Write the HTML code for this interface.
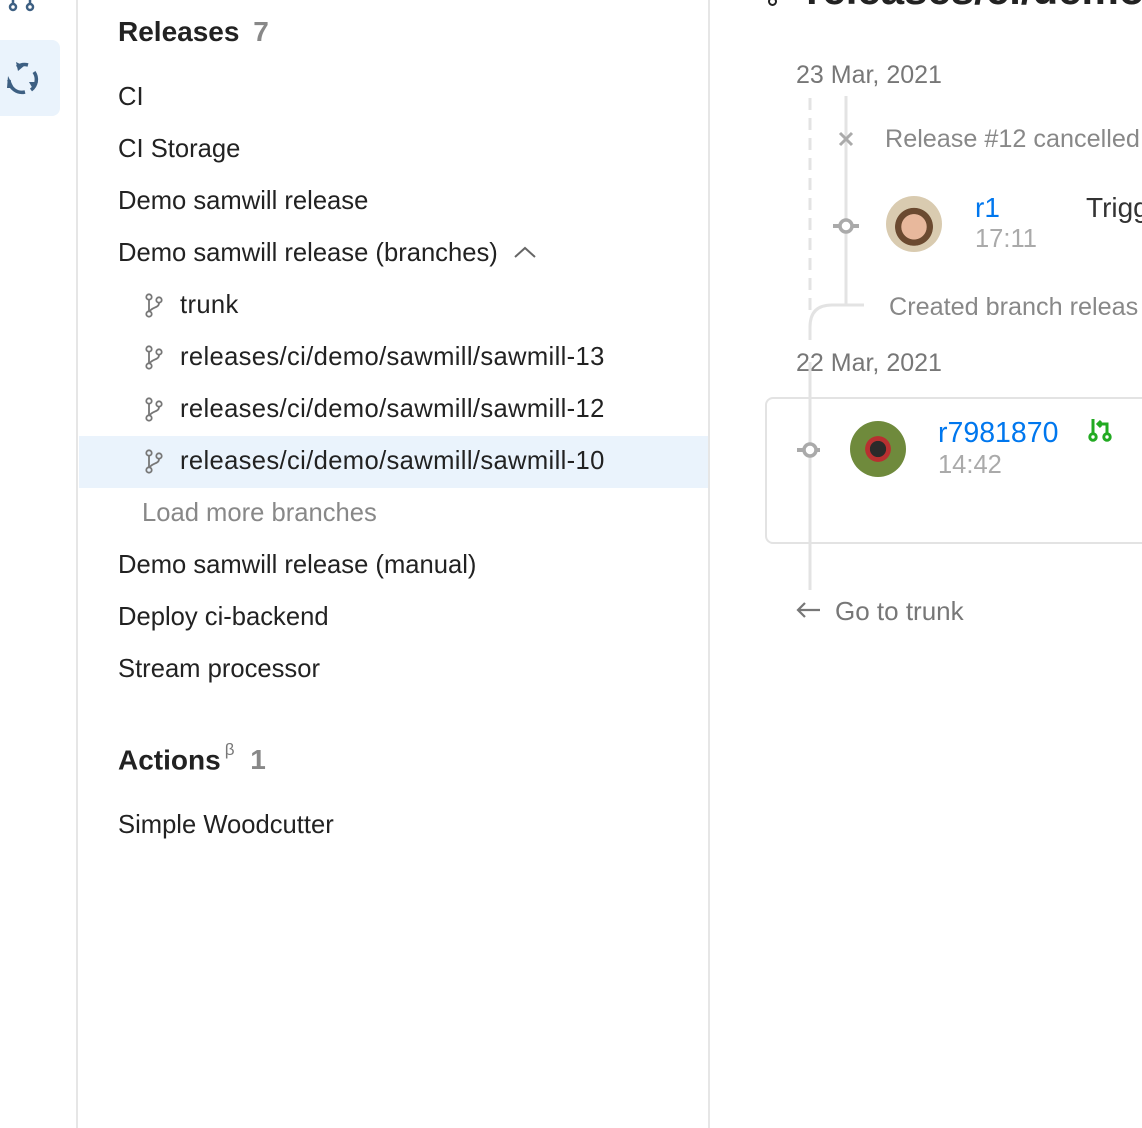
<!DOCTYPE html>
<html><head><meta charset="utf-8"><style>
*{margin:0;padding:0;box-sizing:border-box}
html,body{width:1142px;height:1128px;overflow:hidden}
body{background:#fff;font-family:"Liberation Sans",sans-serif;color:#222;position:relative}
.a{position:absolute;white-space:nowrap}
.it{position:absolute;left:118px;font-size:25.6px;line-height:52px;height:52px;color:#222}
.br{left:180px;letter-spacing:0.35px}
.g{color:#888}
#r{position:absolute;left:710px;top:0;width:432px;height:1128px;overflow:hidden}
#r .a{margin-left:-710px}
</style></head><body>
<div class="a" style="left:0;top:0;width:78px;height:1128px;border-right:2px solid #e6e6e6"></div>
<div class="a" style="left:0;top:40px;width:60px;height:76px;background:#eaf3fc;border-radius:0 8px 8px 0"></div>
<svg class="a" style="left:0;top:0" width="78" height="120">
<g fill="none" stroke="#3d5f82" stroke-width="2.5"><circle cx="13" cy="7" r="3"/><circle cx="30" cy="7" r="3"/></g>
<line x1="13" y1="0" x2="13" y2="4" stroke="#3d5f82" stroke-width="2.5"/><line x1="30" y1="0" x2="30" y2="4" stroke="#3d5f82" stroke-width="2.5"/>
<g fill="none" stroke="#3d5f82" stroke-width="3.5">
<path d="M17 67 A13 13 0 0 1 28 65"/><path d="M34 72 A13 13 0 0 1 31 90"/><path d="M25 92 A13 13 0 0 1 9 80"/></g>
<g fill="#3d5f82"><path d="M16 62 L24 66 L18 71Z"/><path d="M38 82 L33 89 L29 82Z"/><path d="M8 76 L14 88 L7 88Z"/></g>
</svg>
<div class="a" style="left:708px;top:0;width:2px;height:1128px;background:#e6e6e6"></div>
<div class="a" style="left:118px;top:12px;font-size:28px;line-height:40px;font-weight:bold;color:#222">Releases <span style="color:#888;margin-left:6px">7</span></div>
<div class="it" style="top:71px">CI</div>
<div class="it" style="top:123px">CI Storage</div>
<div class="it" style="top:175px">Demo samwill release</div>
<div class="it" style="top:227px">Demo samwill release (branches)</div>
<svg class="a" style="left:512px;top:244px" width="26" height="16"><path d="M3 13 L13 4 L23 13" fill="none" stroke="#666" stroke-width="2"/></svg>
<div class="a" style="left:79px;top:436px;width:629px;height:52px;background:#eaf3fc"></div>
<div class="it br" style="top:279px">trunk</div>
<div class="it br" style="top:331px">releases/ci/demo/sawmill/sawmill-13</div>
<div class="it br" style="top:383px">releases/ci/demo/sawmill/sawmill-12</div>
<div class="it br" style="top:435px">releases/ci/demo/sawmill/sawmill-10</div>
<svg class="a" style="left:140px;top:290px" width="30" height="190">
<defs><g id="b" fill="none" stroke="#777" stroke-width="1.8"><circle cx="9" cy="7" r="2.7"/><circle cx="19" cy="10" r="2.7"/><circle cx="9" cy="24" r="2.7"/><path d="M9 10 V21"/><path d="M19 13 C19 18 12 17 10 21"/></g></defs>
<use href="#b" y="0"/><use href="#b" y="52"/><use href="#b" y="104"/><use href="#b" y="156"/>
</svg>
<div class="it g" style="left:142px;top:487px">Load more branches</div>
<div class="it" style="top:539px">Demo samwill release (manual)</div>
<div class="it" style="top:591px">Deploy ci-backend</div>
<div class="it" style="top:643px">Stream processor</div>
<div class="a" style="left:118px;top:734px;font-size:28px;line-height:40px;font-weight:bold;color:#222">Actions<sup style="font-size:17px;font-weight:normal;color:#777;position:relative;top:-4px;margin-left:4px">β</sup> <span style="color:#888;margin-left:8px">1</span></div>
<div class="it" style="top:799px">Simple Woodcutter</div>
<div id="r">
<div class="a" style="left:806px;top:-34px;font-size:42px;font-weight:bold;line-height:48px;color:#222">releases/ci/demo/sawmill</div>
<div class="a" style="left:768px;top:-3px;width:9px;height:9px;border:2.5px solid #222;border-radius:50%"></div>
<div class="a g" style="left:796px;top:61px;font-size:25px;line-height:28px;color:#777">23 Mar, 2021</div>
<div class="a g" style="left:796px;top:349px;font-size:25px;line-height:28px;color:#777">22 Mar, 2021</div>
<svg class="a" style="left:760px;top:90px" width="382" height="520">
<line x1="50" y1="8" x2="50" y2="225" stroke="#e3e3e3" stroke-width="3" stroke-dasharray="12,8"/>
<line x1="86" y1="6" x2="86" y2="215" stroke="#e3e3e3" stroke-width="3"/>
<path d="M104 215 H72 Q50 215 50 237 V250" fill="none" stroke="#e3e3e3" stroke-width="3"/>
<line x1="50" y1="272" x2="50" y2="500" stroke="#e3e3e3" stroke-width="3"/>
<path d="M80 43 L92 55 M92 43 L80 55" stroke="#aaa" stroke-width="3"/>
<rect x="73" y="134" width="26" height="4" fill="#aaa"/><circle cx="86" cy="136" r="6" fill="#fff" stroke="#aaa" stroke-width="3.5"/>
</svg>
<div class="a" style="left:765px;top:397px;width:400px;height:147px;border:2px solid #e3e3e3;border-radius:8px"></div>
<svg class="a" style="left:760px;top:380px" width="60" height="220">
<line x1="50" y1="0" x2="50" y2="210" stroke="#e3e3e3" stroke-width="3"/>
<rect x="37" y="68" width="26" height="4" fill="#aaa"/><circle cx="50" cy="70" r="6" fill="#fff" stroke="#aaa" stroke-width="3.5"/>
</svg>
<div class="a" style="left:885px;top:125px;font-size:25.2px;line-height:28px;color:#888">Release #12 cancelled</div>
<div class="a" style="left:886px;top:196px;width:56px;height:56px;border-radius:50%;background:radial-gradient(circle at 50% 55%,#e8b89c 0 30%,#6b4a30 31% 45%,#d9cbb0 46%)"></div>
<div class="a" style="left:975px;top:194px;font-size:28px;line-height:28px;color:#0077ee">r1</div>
<div class="a" style="left:975px;top:225px;font-size:25.5px;line-height:28px;color:#aaa">17:11</div>
<div class="a" style="left:1086px;top:194px;font-size:28px;line-height:28px;color:#333">Trigg</div>
<div class="a" style="left:889px;top:293px;font-size:25.2px;line-height:28px;color:#888">Created branch releas</div>
<div class="a" style="left:850px;top:421px;width:56px;height:56px;border-radius:50%;background:radial-gradient(circle at 50% 50%,#2a2a2a 0 20%,#b83030 21% 32%,#6f8a3c 33%)"></div>
<div class="a" style="left:938px;top:419px;font-size:28.5px;line-height:28px;color:#0077ee">r7981870</div>
<div class="a" style="left:938px;top:451px;font-size:25.5px;line-height:28px;color:#aaa">14:42</div>
<svg class="a" style="left:1086px;top:416px" width="30" height="30"><g fill="none" stroke="#22aa22" stroke-width="3"><circle cx="7" cy="21" r="3.2"/><circle cx="21" cy="21" r="3.2"/><path d="M7 18 V3"/><path d="M21 18 V8 H12"/><path d="M15 5 L12 8 L15 11"/></g></svg>
<svg class="a" style="left:794px;top:600px" width="30" height="20"><path d="M26 10 H4 M11 3 L4 10 L11 17" fill="none" stroke="#777" stroke-width="2.2"/></svg>
<div class="a" style="left:835px;top:597px;font-size:26px;line-height:28px;color:#777">Go to trunk</div>
</div>
</body></html>
